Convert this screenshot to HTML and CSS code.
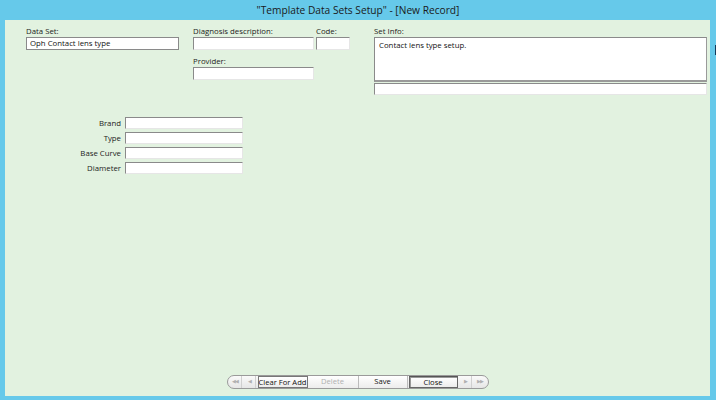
FILE: index.html
```html
<!DOCTYPE html>
<html>
<head>
<meta charset="utf-8">
<link rel="stylesheet" href="styles.css">
</head>
<body>
<div class="title">"Template Data Sets Setup" - [New Record]</div>
<div class="row">
  <div class="panel">
    <div class="top">
      <div class="field f-dataset">
        <div class="lbl">Data Set:</div>
        <div class="inp">Oph Contact lens type</div>
      </div>
      <div class="col2">
        <div class="pair">
          <div class="field f-diag">
            <div class="lbl">Diagnosis description:</div>
            <div class="inp"></div>
          </div>
          <div class="field f-code">
            <div class="lbl">Code:</div>
            <div class="inp"></div>
          </div>
        </div>
        <div class="field f-prov">
          <div class="lbl">Provider:</div>
          <div class="inp"></div>
        </div>
      </div>
      <div class="field f-info">
        <div class="lbl">Set Info:</div>
        <div class="inp area">Contact lens type setup.</div>
        <div class="inp under"></div>
      </div>
    </div>
    <div class="lens">
      <div class="llbl">Brand</div><div class="inp linp"></div>
      <div class="llbl">Type</div><div class="inp linp"></div>
      <div class="llbl">Base Curve</div><div class="inp linp"></div>
      <div class="llbl">Diameter</div><div class="inp linp"></div>
    </div>
    <div class="spacer"></div>
    <div class="navwrap">
      <div class="nav">
        <div class="nb arrow">&#9664;&#9664;</div>
        <div class="nb arrow">&#9664;</div>
        <div class="nb btn active">Clear For Add</div>
        <div class="nb btn disabled">Delete</div>
        <div class="nb btn save">Save</div>
        <div class="nb btn close">Close</div>
        <div class="nb arrow">&#9654;</div>
        <div class="nb arrow last">&#9654;&#9654;</div>
      </div>
    </div>
  </div>
  <div class="edge"><div class="edge-dark"></div></div>
</div>
</body>
</html>
```
FILE: styles.css
```css
html, body {
  margin: 0;
  padding: 0;
}
body {
  width: 716px;
  height: 400px;
  background: #66c9ea;
  font-family: "Open Sans", "Noto Sans", sans-serif;
  overflow: hidden;
}
.title {
  height: 20px;
  line-height: 21px;
  text-align: center;
  font-size: 10.2px;
  color: #1a1a1a;
}
.row {
  display: flex;
  height: 376px;
}
.panel {
  margin-left: 5px;
  width: 705px;
  height: 376px;
  background: #e2f2e0;
  display: flex;
  flex-direction: column;
  font-size: 7.8px;
  color: #222;
}
.edge {
  margin-left: 5px;
  width: 1px;
  padding-top: 25px;
}
.edge-dark {
  height: 10px;
  background: #123a5a;
}
.top {
  display: flex;
  padding-top: 6px;
}
.lbl {
  height: 11px;
  line-height: 10px;
}
.inp {
  box-sizing: border-box;
  background: #fff;
  border-top: 1px solid #8a8a8a;
  border-left: 1px solid #8a8a8a;
  border-right: 1px solid #e6e6e6;
  border-bottom: 1px solid #e6e6e6;
  height: 13px;
  line-height: 11px;
  padding-left: 3px;
  color: #111;
}
.f-dataset {
  margin-left: 21px;
  width: 153px;
}
.f-dataset .inp {
  border: 1px solid #8a8a8a;
}
.col2 {
  margin-left: 14px;
  display: flex;
  flex-direction: column;
}
.pair {
  display: flex;
  gap: 2px;
}
.f-diag {
  width: 121px;
}
.f-code {
  width: 34px;
}
.f-prov {
  margin-top: 6px;
  width: 121px;
}
.f-info {
  margin-left: 24px;
  width: 333px;
}
.f-info .area {
  height: 45px;
  border: 1px solid #8a8a8a;
  border-right-color: #9a9a9a;
  border-bottom-width: 2px;
  border-bottom-color: #9a9a9a;
  padding-top: 2px;
  padding-left: 4px;
}
.f-info .under {
  margin-top: 1px;
  height: 12px;
}
.lens {
  margin-top: 22px;
  display: grid;
  grid-template-columns: 116px 118px;
  column-gap: 4px;
  row-gap: 3px;
  align-items: center;
}
.llbl {
  text-align: right;
  line-height: 12px;
}
.linp {
  height: 12px;
}
.spacer {
  flex: 1;
}
.navwrap {
  display: flex;
  justify-content: center;
  padding-bottom: 7px;
}
.nav {
  display: flex;
  align-items: center;
  height: 14px;
  box-sizing: border-box;
  border: 1px solid #9a9a9a;
  border-radius: 7px;
  background: linear-gradient(#fafafa, #e6e6e6);
  padding: 0 2px;
  gap: 2px;
}
.nb {
  box-sizing: border-box;
  height: 12px;
  line-height: 11px;
  text-align: center;
  font-size: 7.6px;
}
.arrow {
  width: 12px;
  color: #b0b0b0;
  font-size: 5px;
  letter-spacing: -1px;
  border-right: 1px solid #d0d0d0;
}
.arrow.last {
  border-right: none;
}
.btn {
  width: 50px;
  color: #111;
  background: linear-gradient(#ffffff, #ececec);
}
.btn.active {
  border: 1px solid #777;
  width: 50px;
}
.btn.disabled {
  color: #b0b0b0;
  margin-left: -2px;
}
.btn.save {
  border-left: 1px solid #bbb;
  border-right: 1px solid #bbb;
  margin-left: -2px;
}
.btn.close {
  border: 1px solid #666;
  border-top-color: #555;
  box-shadow: inset 1px 1px 0 #999;
  width: 49px;
  margin-left: -1px;
}
```
